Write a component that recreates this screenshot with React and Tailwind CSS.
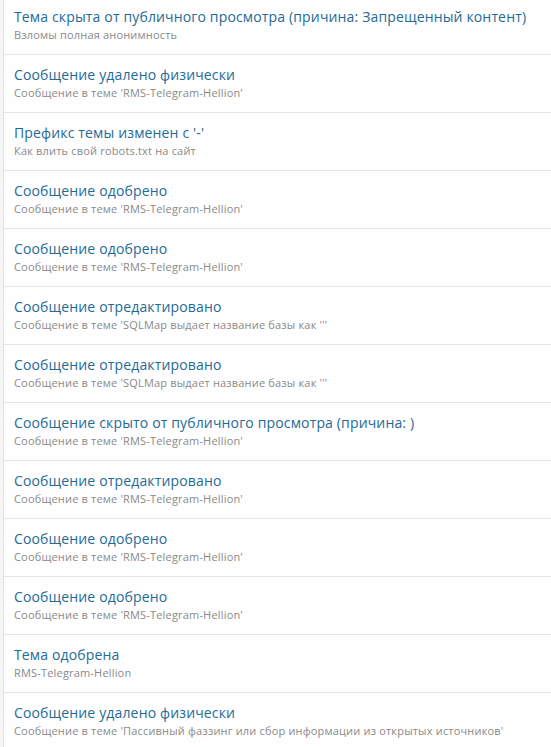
import React from "react";

const rows = [
  ["Тема скрыта от публичного просмотра (причина: Запрещенный контент)", "Взломы полная анонимность"],
  ["Сообщение удалено физически", "Сообщение в теме 'RMS-Telegram-Hellion'"],
  ["Префикс темы изменен с '-'", "Как влить свой robots.txt на сайт"],
  ["Сообщение одобрено", "Сообщение в теме 'RMS-Telegram-Hellion'"],
  ["Сообщение одобрено", "Сообщение в теме 'RMS-Telegram-Hellion'"],
  ["Сообщение отредактировано", "Сообщение в теме 'SQLMap выдает название базы как '''"],
  ["Сообщение отредактировано", "Сообщение в теме 'SQLMap выдает название базы как '''"],
  ["Сообщение скрыто от публичного просмотра (причина: )", "Сообщение в теме 'RMS-Telegram-Hellion'"],
  ["Сообщение отредактировано", "Сообщение в теме 'RMS-Telegram-Hellion'"],
  ["Сообщение одобрено", "Сообщение в теме 'RMS-Telegram-Hellion'"],
  ["Сообщение одобрено", "Сообщение в теме 'RMS-Telegram-Hellion'"],
  ["Тема одобрена", "RMS-Telegram-Hellion"],
  ["Сообщение удалено физически", "Сообщение в теме 'Пассивный фаззинг или сбор информации из открытых источников'"],
];

export default function App() {
  return (
    <div className="h-[747px] overflow-hidden bg-[#f5f5f5] pl-[3px]" style={{ fontFamily: '"Open Sans", "Noto Sans", sans-serif' }}>
      <div className="-mt-[3px] min-h-[760px] border-l border-[#e2e2e2] bg-[#fefefe]">
        {rows.map(([t, s], i) => (
          <div key={i} className="h-[58px] border-b border-[#e6e6e6] pl-[10px] pt-[10px]">
            <div className="text-[14px] leading-[20px] tracking-[0.15px] text-[#1f6b96] whitespace-nowrap">{t}</div>
            <div className="text-[11px] leading-[15px] tracking-[0.18px] text-[#8a8a8a] whitespace-nowrap">{s}</div>
          </div>
        ))}
      </div>
    </div>
  );
}
